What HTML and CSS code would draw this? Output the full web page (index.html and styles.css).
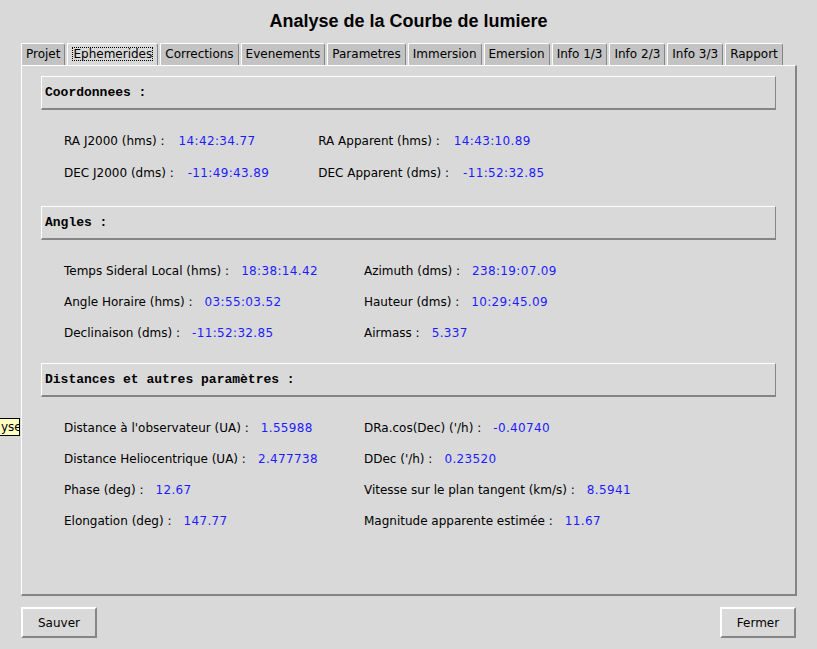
FILE: index.html
```html
<!DOCTYPE html>
<html lang="fr">
<head>
<meta charset="utf-8">
<title>Analyse de la Courbe de lumiere</title>
<link rel="stylesheet" href="styles.css">
</head>
<body>
<div class="window">
  <h1 class="title">Analyse de la Courbe de lumiere</h1>
  <div class="tabs">
    <div class="tab">Projet</div>
    <div class="tab tab-active"><span class="focus">Ephemerides</span></div>
    <div class="tab">Corrections</div>
    <div class="tab">Evenements</div>
    <div class="tab">Parametres</div>
    <div class="tab">Immersion</div>
    <div class="tab">Emersion</div>
    <div class="tab">Info 1/3</div>
    <div class="tab">Info 2/3</div>
    <div class="tab">Info 3/3</div>
    <div class="tab">Rapport</div>
  </div>
  <div class="panel">
    <section class="section section-coord">
      <div class="section-head">Coordonnees :</div>
      <div class="rows">
        <div class="cell"><span class="lbl">RA J2000 (hms) :</span><span class="val">14:42:34.77</span></div>
        <div class="cell"><span class="lbl">RA Apparent (hms) :</span><span class="val">14:43:10.89</span></div>
        <div class="cell"><span class="lbl">DEC J2000 (dms) :</span><span class="val">-11:49:43.89</span></div>
        <div class="cell"><span class="lbl">DEC Apparent (dms) :</span><span class="val">-11:52:32.85</span></div>
      </div>
    </section>
    <section class="section">
      <div class="section-head">Angles :</div>
      <div class="rows">
        <div class="cell"><span class="lbl">Temps Sideral Local (hms) :</span><span class="val">18:38:14.42</span></div>
        <div class="cell"><span class="lbl">Azimuth (dms) :</span><span class="val">238:19:07.09</span></div>
        <div class="cell"><span class="lbl">Angle Horaire (hms) :</span><span class="val">03:55:03.52</span></div>
        <div class="cell"><span class="lbl">Hauteur (dms) :</span><span class="val">10:29:45.09</span></div>
        <div class="cell"><span class="lbl">Declinaison (dms) :</span><span class="val">-11:52:32.85</span></div>
        <div class="cell"><span class="lbl">Airmass :</span><span class="val">5.337</span></div>
      </div>
    </section>
    <section class="section">
      <div class="section-head">Distances et autres paramètres :</div>
      <div class="rows">
        <div class="cell"><span class="lbl">Distance à l'observateur (UA) :</span><span class="val">1.55988</span></div>
        <div class="cell"><span class="lbl">DRa.cos(Dec) ('/h) :</span><span class="val">-0.40740</span></div>
        <div class="cell"><span class="lbl">Distance Heliocentrique (UA) :</span><span class="val">2.477738</span></div>
        <div class="cell"><span class="lbl">DDec ('/h) :</span><span class="val">0.23520</span></div>
        <div class="cell"><span class="lbl">Phase (deg) :</span><span class="val">12.67</span></div>
        <div class="cell"><span class="lbl">Vitesse sur le plan tangent (km/s) :</span><span class="val">8.5941</span></div>
        <div class="cell"><span class="lbl">Elongation (deg) :</span><span class="val">147.77</span></div>
        <div class="cell"><span class="lbl">Magnitude apparente estimée :</span><span class="val">11.67</span></div>
      </div>
    </section>
  </div>
  <div class="footer">
    <button class="btn">Sauver</button>
    <button class="btn">Fermer</button>
  </div>
  <div class="tooltip">yse</div>
</div>
</body>
</html>
```
FILE: styles.css
```css
html, body {
  margin: 0;
  padding: 0;
  background: #d9d9d9;
}
.window {
  position: relative;
  width: 817px;
  height: 649px;
  overflow: hidden;
  font-family: "DejaVu Sans", sans-serif;
  font-size: 12px;
  color: #000;
}
.title {
  margin: 0;
  height: 43px;
  padding-top: 10px;
  box-sizing: border-box;
  text-align: center;
  font-family: "Liberation Sans", Arial, sans-serif;
  font-weight: bold;
  font-size: 18px;
  line-height: 22px;
  color: #000;
}
.tabs {
  display: flex;
  align-items: flex-end;
  gap: 2px;
  margin-left: 21px;
  height: 22px;
}
.tab {
  height: 22px;
  box-sizing: border-box;
  padding: 0 4px;
  line-height: 20px;
  background: #c3c3c3;
  border-top: 1px solid #fff;
  border-left: 1px solid #fff;
  border-right: 1px solid #858585;
  border-top-right-radius: 3px;
  white-space: nowrap;
}
.tab-active {
  background: #d9d9d9;
}
.focus {
  outline: 1px dotted #000;
  outline-offset: -1px;
  padding: 0 1px;
}
.panel {
  margin: 0 20px 0 21px;
  height: 531px;
  box-sizing: border-box;
  border-top: 1px solid #fff;
  border-left: 1px solid #fff;
  border-right: 2px solid #858585;
  border-bottom: 2px solid #858585;
  padding: 10px 19px 0 19px;
}
.section-head {
  height: 34px;
  box-sizing: border-box;
  border-top: 1px solid #fff;
  border-left: 1px solid #fff;
  border-right: 1px solid #858585;
  border-bottom: 2px solid #858585;
  padding-left: 3px;
  line-height: 31px;
  font-family: "Liberation Mono", "Courier New", monospace;
  font-weight: bold;
  font-size: 13px;
}
.rows {
  display: grid;
  grid-template-columns: auto auto;
  justify-content: start;
  column-gap: 46px;
  grid-auto-rows: 31px;
  padding: 15px 0 15px 23px;
}
.section-coord .rows {
  grid-auto-rows: 32px;
  column-gap: 49px;
  padding-top: 15px;
  padding-bottom: 17px;
}
.cell {
  display: flex;
  align-items: center;
  gap: 12px;
  white-space: nowrap;
}
.section-coord .cell {
  gap: 14px;
}
.val {
  color: #1c1cff;
  letter-spacing: 0.35px;
}
.footer {
  display: flex;
  justify-content: space-between;
  padding: 11px 21px 0 21px;
}
.btn {
  width: 76px;
  height: 31px;
  box-sizing: border-box;
  background: #d9d9d9;
  border-top: 2px solid #fff;
  border-left: 2px solid #fff;
  border-right: 2px solid #858585;
  border-bottom: 2px solid #858585;
  font-family: "DejaVu Sans", sans-serif;
  font-size: 12px;
  color: #000;
  padding: 0;
}
.tooltip {
  position: absolute;
  left: 0;
  top: 418px;
  width: 20px;
  height: 18px;
  box-sizing: border-box;
  background: #ffffc4;
  border: 1px solid #000;
  border-left: none;
  line-height: 16px;
  font-size: 12px;
  padding-left: 1px;
  overflow: hidden;
  white-space: nowrap;
}
```
